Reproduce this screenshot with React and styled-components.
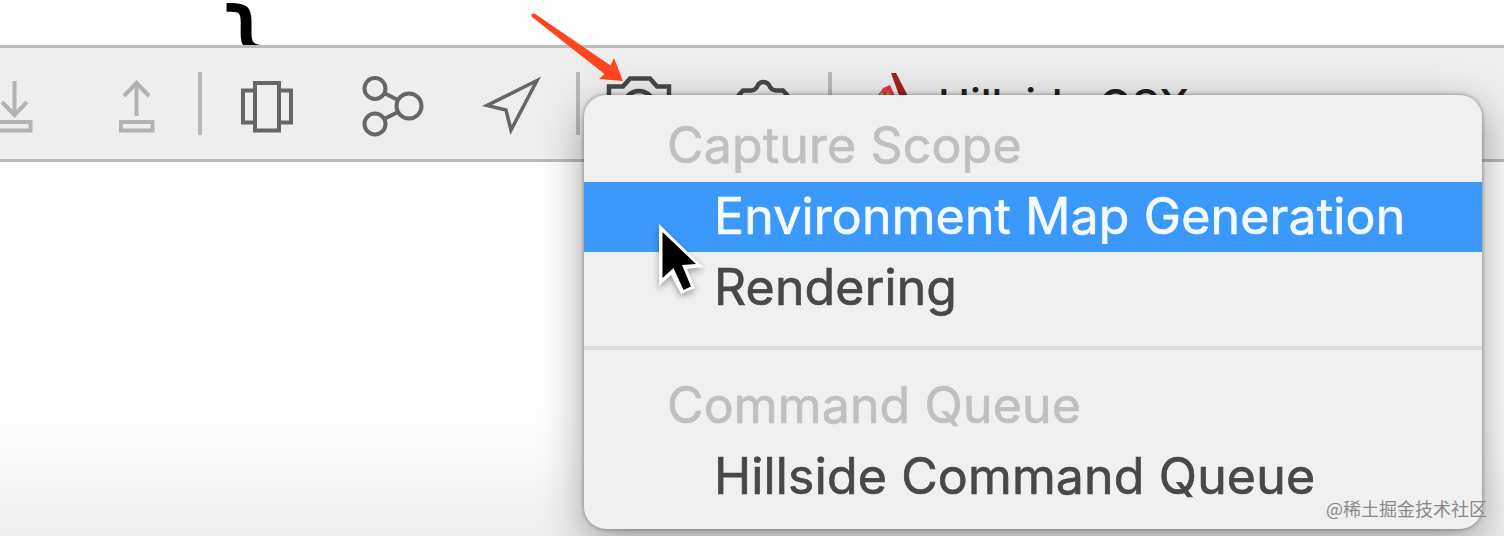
import React from 'react';
import styled, { createGlobalStyle } from 'styled-components'

const GlobalStyle = createGlobalStyle`
  body {
    margin: 0;
    overflow: hidden;
  }
`

const Window = styled.div`
  position: relative;
  width: 1504px;
  height: 536px;
  overflow: hidden;
  display: flex;
  flex-direction: column;
  background: #fefefe;
  font-family: Inter, 'Liberation Sans', sans-serif;
`

const Editor = styled.div`
  height: 45px;
  box-sizing: border-box;
  padding-left: 217px;
  overflow: hidden;
`

const Brace = styled.div`
  margin-top: -4px;
  font: 98px/98px 'DejaVu Sans Mono', monospace;
  -webkit-text-stroke: 2px #000;
  color: #000;
`

const Toolbar = styled.div`
  height: 117px;
  box-sizing: border-box;
  flex-shrink: 0;
  display: flex;
  align-items: center;
  background: #eeeeee;
  border-top: 3px solid #bcbcbc;
  border-bottom: 3px solid #bababa;
`

const Icon = styled.svg`
  flex-shrink: 0;
  height: 80px;
  margin-left: ${props => props.$gap}px;
  fill: none;
  stroke: ${props => props.$color || '#666'};
  stroke-width: ${props => props.$stroke || 4};
`

const Separator = styled.div`
  flex-shrink: 0;
  width: 4px;
  height: 63px;
  margin-left: ${props => props.$gap}px;
  background: #b9b9b9;
`

const ProcessName = styled.span`
  margin-left: 26px;
  font-size: 43px;
  line-height: 50px;
  font-weight: 500;
  letter-spacing: -0.1px;
  color: #222;
`

const Content = styled.div`
  flex-grow: 1;
  background: linear-gradient(#fefefe 66%, #fafafa 80%, #eeeeee);
`

const Menu = styled.div`
  position: absolute;
  left: 584px;
  top: 95px;
  width: 898px;
  height: 434px;
  box-sizing: border-box;
  padding: 17px 0;
  border-radius: 22px;
  background: #f0f0f0;
  box-shadow: 0 0 4px rgba(0, 0, 0, 0.4), 0 12px 44px rgba(0, 0, 0, 0.36);
`

const MenuRow = styled.div`
  height: 70px;
  box-sizing: border-box;
  font-size: 50px;
  white-space: nowrap;
  letter-spacing: 0.15px;
  -webkit-text-stroke: 0.7px currentColor;
`

const MenuHeader = styled(MenuRow)`
  padding-left: 83px;
  line-height: 66px;
  color: #bfc1bf;
`

const MenuItem = styled(MenuRow)`
  padding-left: 130px;
  line-height: ${props => props.$lineHeight || 68}px;
  color: ${props => props.$active ? '#f4faff' : '#484848'};
  background: ${props => props.$active ? '#3b99fc' : 'transparent'};
`

const Divider = styled.div`
  height: 4px;
  margin: 24px 0 22px;
  background: #dcdcdc;
`

const Overlay = styled.svg`
  position: absolute;
  left: ${props => props.$left}px;
  top: ${props => props.$top}px;
`

const Cursor = styled(Overlay)`
  filter: drop-shadow(0 3px 3px rgba(0, 0, 0, 0.35));
`

const Watermark = styled.div`
  position: absolute;
  right: 17px;
  bottom: 16px;
  font: 18px/24px 'Noto Sans CJK SC', sans-serif;
  color: #8a8a8a;
  white-space: nowrap;
`

const items = {
  scopes: [
    { label: 'Environment Map Generation', active: true },
    { label: 'Rendering', lineHeight: 70 }
  ],
  queues: [
    { label: 'Hillside Command Queue', lineHeight: 68 }
  ]
}

const renderItem = (item) => {
  return <MenuItem key={item.label} $active={item.active} $lineHeight={item.lineHeight}>
    <span>{item.label}</span>
  </MenuItem>
}

class App extends React.Component {
  render() {
    return (
      <Window>
        <GlobalStyle />
        <Editor>
          <Brace>{'}'}</Brace>
        </Editor>
        <Toolbar>
          <Icon $gap={0} $color="#b2b2b2" width="34" viewBox="0 63 34 80">
            <path d="M14.5 80V114M2 101L14.5 114L27 101M-4 121H30.5V129.5H-4Z" />
          </Icon>
          <Icon $gap={84} $color="#b2b2b2" width="38" viewBox="118 63 38 80">
            <path d="M136.5 115V82M124 95L136.5 82L149 95M121 121H152.5V129.5H121Z" />
          </Icon>
          <Separator $gap={42} />
          <Icon $gap={37} width="56" viewBox="239 63 56 80">
            <path d="M255 82H279V129.5H255ZM255 89.5H243V121.5H255M279 89.5H291V121.5H279" />
          </Icon>
          <Icon $gap={65} width="66" viewBox="360 63 66 80">
            <circle cx="375" cy="87.5" r="10.5" />
            <circle cx="375" cy="123" r="10.5" />
            <circle cx="409" cy="105" r="12.5" />
            <path d="M385 92.5L398 99M385 117.5L398 111" />
          </Icon>
          <Icon $gap={55} $stroke={3.5} width="62" viewBox="481 63 62 80">
            <path d="M537 79.5L487 104.5L506 109L511 129Z" />
          </Icon>
          <Separator $gap={33} />
          <Icon $gap={25} $color="#484848" $stroke={4.5} width="68" viewBox="605 63 68 80">
            <path d="M609 125V85.5H623L630 77.5H650L657 85.5H669V125Z" />
            <circle cx="639" cy="105" r="15" />
          </Icon>
          <Icon $gap={61} $color="#484848" $stroke={4.5} width="58" viewBox="734 63 58 80">
            <path d="M738 95L743 89.5H751Q756 89 758 84Q760 81 763 81Q767 81 769 84Q771 89 776 89.5H783L788 95" />
          </Icon>
          <Separator $gap={36} />
          <Icon $gap={42} width="38" viewBox="873 63 38 80">
            <path d="M875 97L882 87L889 84L895 97Z" fill="#d83b48" stroke="none" />
            <path d="M876 97L881 90L884 97Z" fill="#a3a35c" stroke="none" />
            <path d="M883 97L887 89L892 97Z" fill="#ee6a3a" stroke="none" />
            <path d="M890 72L895 72L908 97H899Z" fill="#a81f24" stroke="none" />
          </Icon>
          <ProcessName>Hillside OSX</ProcessName>
        </Toolbar>
        <Content />
        <Menu>
          <MenuHeader>Capture Scope</MenuHeader>
          {items.scopes.map(renderItem)}
          <Divider />
          <MenuHeader>Command Queue</MenuHeader>
          {items.queues.map(renderItem)}
        </Menu>
        <Overlay $left={525} $top={8} width="104" height="80" viewBox="525 8 104 80">
          <path d="M534.5 13.5L610.5 65.5L614 58L623 81L599 79L604.5 74L532 17Q530 13 534.5 13.5Z" fill="#ff4421" />
        </Overlay>
        <Cursor $left={645} $top={215} width="70" height="90" viewBox="645 215 70 90">
          <path d="M659 224V286L671 275L681 294L695 288L687 269L703 267Z" fill="#fff" />
          <path d="M662.5 232V278L673.5 268L683.5 290L691 286.5L682 265L696 264Z" fill="#000" />
        </Cursor>
        <Watermark>@稀土掘金技术社区</Watermark>
      </Window>
    );
  }
}

export default App;
